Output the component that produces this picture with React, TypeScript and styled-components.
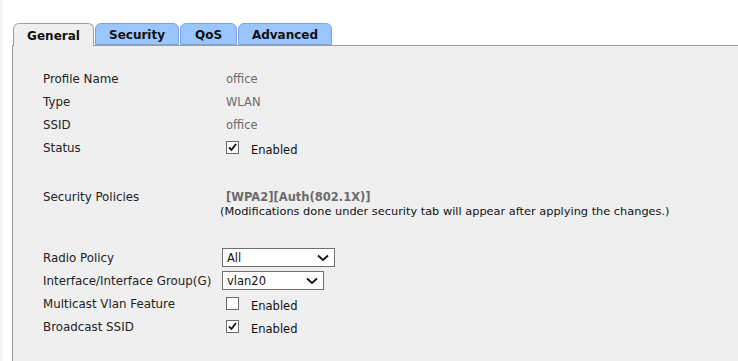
import React from 'react'
import styled, { createGlobalStyle } from 'styled-components'

const GlobalStyle = createGlobalStyle`
  html, body {
    margin: 0;
    padding: 0;
    background: #ffffff;
  }
  body {
    font-family: 'DejaVu Sans', Verdana, sans-serif;
    font-size: 11px;
    color: #222;
  }
`

const Page = styled.div`
  width: 738px;
  height: 361px;
  box-sizing: border-box;
  padding-top: 23px;
  padding-left: 12px;
  display: flex;
  flex-direction: column;
  overflow: hidden;
  background: linear-gradient(to right, #f4f4f4 0, #f4f4f4 3px, #fff 3px);
`

const TabBar = styled.div`
  display: flex;
  align-items: flex-end;
  padding-left: 1px;
  height: 22px;
`

const Tab = styled.div<{ active?: boolean; width: number }>`
  box-sizing: border-box;
  width: ${(p) => p.width}px;
  height: ${(p) => (p.active ? 23 : 22)}px;
  margin-bottom: ${(p) => (p.active ? -1 : 0)}px;
  margin-right: 1px;
  border: 1px solid ${(p) => (p.active ? '#a0a0a0' : '#7fa3d6')};
  border-bottom: ${(p) => (p.active ? 'none' : '1px solid #7fa3d6')};
  border-radius: 6px 6px 0 0;
  background: ${(p) => (p.active ? '#efefef' : '#9ac5ff')};
  font-weight: bold;
  font-size: 12px;
  color: #111;
  display: flex;
  align-items: center;
  justify-content: center;
  padding-top: 1px;
  position: relative;
  z-index: ${(p) => (p.active ? 2 : 1)};
`

const Panel = styled.div`
  flex: 1;
  background: #efefef;
  border-top: 1px solid #9c9c9c;
  border-left: 1px solid #9c9c9c;
  padding: 21px 0 0 30px;
`

const Row = styled.div<{ height?: number }>`
  display: grid;
  grid-template-columns: 183px 1fr;
  align-items: center;
  height: ${(p) => p.height ?? 23}px;
`

const Label = styled.div`
  color: #222;
  font-size: 11.85px;
  white-space: nowrap;
`

const Value = styled.div`
  color: #6b6b6b;
  font-size: 11.5px;
`

const Spacer = styled.div<{ size: number }>`
  height: ${(p) => p.size}px;
`

const Policy = styled.div`
  color: #6b6b6b;
  font-weight: bold;
  font-size: 11.5px;
`

const Note = styled.div`
  padding-left: 177px;
  color: #111;
  font-size: 11.35px;
  margin-top: -4px;
  white-space: nowrap;
`

const CheckWrap = styled.label`
  display: flex;
  align-items: center;
  gap: 12px;
  color: #111;
  font-size: 11.5px;
  padding-top: 4px;
`

const Box = styled.span`
  box-sizing: border-box;
  width: 13px;
  height: 13px;
  border: 1px solid #6a6a6a;
  background: #fff;
  display: inline-flex;
  align-items: center;
  justify-content: center;
  margin-top: -5px;
`

const SelectBox = styled.div<{ width: number }>`
  box-sizing: border-box;
  width: ${(p) => p.width}px;
  height: 19px;
  margin-left: -4px;
  border: 1px solid #6f6f6f;
  background: #fff;
  display: flex;
  align-items: center;
  justify-content: space-between;
  padding: 0 5px 0 4px;
  color: #111;
  font-size: 11.5px;
`

const Checkbox = ({ checked }: { checked?: boolean }) => (
  <CheckWrap>
    <Box>
      {checked && (
        <svg width="11" height="11" viewBox="0 0 11 11">
          <path d="M2 5.5 L4.5 8 L9 2" stroke="#111" strokeWidth="1.8" fill="none" />
        </svg>
      )}
    </Box>
    Enabled
  </CheckWrap>
)

const Select = ({ value, width }: { value: string; width: number }) => (
  <SelectBox width={width}>
    <span>{value}</span>
    <svg width="12" height="8" viewBox="0 0 12 8">
      <path d="M1 1.5 L6 6 L11 1.5" stroke="#111" strokeWidth="1.8" fill="none" />
    </svg>
  </SelectBox>
)

export default function App() {
  return (
    <>
      <GlobalStyle />
      <Page>
        <TabBar>
          <Tab active width={81}>General</Tab>
          <Tab width={84}>Security</Tab>
          <Tab width={57}>QoS</Tab>
          <Tab width={94}>Advanced</Tab>
        </TabBar>
        <Panel>
          <Row>
            <Label>Profile Name</Label>
            <Value>office</Value>
          </Row>
          <Row>
            <Label>Type</Label>
            <Value>WLAN</Value>
          </Row>
          <Row>
            <Label>SSID</Label>
            <Value>office</Value>
          </Row>
          <Row>
            <Label>Status</Label>
            <Checkbox checked />
          </Row>
          <Spacer size={26} />
          <Row>
            <Label>Security Policies</Label>
            <Policy>[WPA2][Auth(802.1X)]</Policy>
          </Row>
          <Note>(Modifications done under security tab will appear after applying the changes.)</Note>
          <Spacer size={28} />
          <Row>
            <Label>Radio Policy</Label>
            <Select value="All" width={113} />
          </Row>
          <Row>
            <Label>Interface/Interface Group(G)</Label>
            <Select value="vlan20" width={102} />
          </Row>
          <Row>
            <Label>Multicast Vlan Feature</Label>
            <Checkbox />
          </Row>
          <Row>
            <Label>Broadcast SSID</Label>
            <Checkbox checked />
          </Row>
        </Panel>
      </Page>
    </>
  )
}
